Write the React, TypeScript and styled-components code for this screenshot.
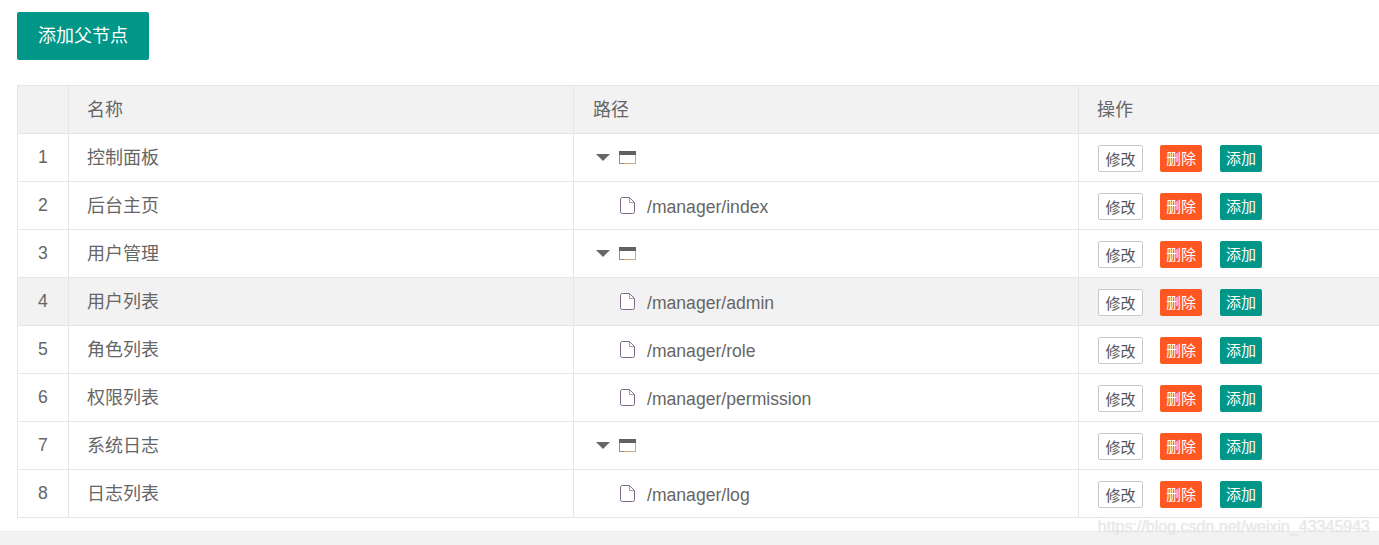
import React from "react";
import styled, { createGlobalStyle } from "styled-components";

const GlobalStyle = createGlobalStyle`
  html, body {
    margin: 0;
    padding: 0;
    background: #fff;
  }
  body {
    font-family: "Liberation Sans", "Noto Sans CJK SC", sans-serif;
    color: #666;
    overflow: hidden;
  }
`;

const Page = styled.div`
  position: relative;
  width: 1379px;
  height: 545px;
  overflow: hidden;
  display: flex;
  flex-direction: column;
`;

const Content = styled.main`
  height: 531px;
  padding: 12px 0 0 17px;
  box-sizing: border-box;
`;

const AddButton = styled.button`
  display: block;
  width: 132px;
  height: 48px;
  padding: 0 0 4px;
  border: 0;
  border-radius: 2px;
  background: #009688;
  color: #fff;
  font: 18px "Liberation Sans", "Noto Sans CJK SC", sans-serif;
`;

const Table = styled.table`
  margin-top: 25px;
  width: 1566px;
  table-layout: fixed;
  border-collapse: collapse;
  font-size: 17.6px;
`;

const Row = styled.tr<{ $hover?: boolean }>`
  height: 48px;
  background: ${({ $hover }) => ($hover ? "#f2f2f2" : "#fff")};
`;

const HeadCell = styled.th`
  padding: 0 18px 4px 19px;
  border: 1px solid #e6e6e6;
  background: #f2f2f2;
  font-weight: 400;
  font-size: 18px;
  text-align: left;
  color: #666;
  box-sizing: border-box;
  &:nth-child(2),
  &:nth-child(4) {
    padding-left: 18px;
  }
`;

const Cell = styled.td`
  padding: 0 18px;
  border: 1px solid #e6e6e6;
  box-sizing: border-box;
  white-space: nowrap;
`;

const IndexCell = styled(Cell)`
  text-align: center;
`;

const NameCell = styled(Cell)`
  font-size: 18px;
  padding-bottom: 4px;
`;

const TreeLine = styled.div<{ $leaf?: boolean }>`
  display: flex;
  align-items: center;
  padding-left: ${({ $leaf }) => ($leaf ? "28px" : "4px")};
  height: 32px;
  margin-top: ${({ $leaf }) => ($leaf ? "3px" : "0")};
`;

const PathText = styled.span`
  margin-left: 12px;
`;

const Caret = styled.i`
  width: 0;
  height: 0;
  border-style: solid;
  border-width: 7px 7px 0;
  border-color: #666 transparent transparent;
  margin-right: 9px;
`;

const Actions = styled.div`
  display: flex;
  padding-left: 1px;
  margin-top: 2px;
`;

const SmallButton = styled.button<{ $kind: "plain" | "danger" | "add" }>`
  height: 27px;
  width: ${({ $kind }) => ($kind === "plain" ? "45px" : "42px")};
  margin-left: ${({ $kind }) =>
    $kind === "plain" ? "0" : $kind === "danger" ? "17px" : "18px"};
  padding: ${({ $kind }) => ($kind === "plain" ? "0" : "0 0 2px")};
  border-radius: 2px;
  box-sizing: border-box;
  font: 15px "Liberation Sans", "Noto Sans CJK SC", sans-serif;
  border: ${({ $kind }) => ($kind === "plain" ? "1px solid #c9c9c9" : "0")};
  color: ${({ $kind }) => ($kind === "plain" ? "#555" : "#fff")};
  background: ${({ $kind }) =>
    $kind === "plain" ? "#fff" : $kind === "danger" ? "#ff5722" : "#009688"};
`;

const Footer = styled.div`
  flex: 1;
  background: #f2f2f2;
  border-top: 1px solid #eaeaea;
`;

const Watermark = styled.div`
  position: absolute;
  right: 9px;
  bottom: 9px;
  font-size: 16px;
  color: rgba(235, 235, 235, 0.75);
  text-shadow: 0 0 1px rgba(190, 190, 190, 0.5);
`;

const FileSvg = styled.svg`
  margin-bottom: 4px;
`;

const FolderIcon = () => (
  <svg width="17" height="13" viewBox="0 0 17 13">
    <rect x="0.5" y="0.5" width="16" height="12" fill="#fff" stroke="#7f93a3" />
    <rect x="0" y="0" width="17" height="4" fill="#5f6164" />
    <path d="M16.5 4v8.500M5 12.5h12" stroke="#d3a77a" fill="none" />
  </svg>
);

const FileIcon = () => (
  <FileSvg width="15" height="17" viewBox="0 0 15 17">
    <path
      d="M2.500.5h7l5 5v9a2 2 0 0 1-2 2h-10a2 2 0 0 1-2-2v-12a2 2 0 0 1 2-2z"
      fill="#fff"
      stroke="#80688c"
    />
    <path d="M9.500.5v5h5" fill="none" stroke="#a3a0a8" />
  </FileSvg>
);

type Item = { id: number; name: string; path?: string };

const items: Item[] = [
  { id: 1, name: "控制面板" },
  { id: 2, name: "后台主页", path: "/manager/index" },
  { id: 3, name: "用户管理" },
  { id: 4, name: "用户列表", path: "/manager/admin" },
  { id: 5, name: "角色列表", path: "/manager/role" },
  { id: 6, name: "权限列表", path: "/manager/permission" },
  { id: 7, name: "系统日志" },
  { id: 8, name: "日志列表", path: "/manager/log" },
];

const App = () => (
  <Page>
    <GlobalStyle />
    <Content>
      <AddButton>添加父节点</AddButton>
      <Table>
        <colgroup>
          <col width="51" />
          <col width="505" />
          <col width="505" />
          <col width="505" />
        </colgroup>
        <thead>
          <Row>
            <HeadCell />
            <HeadCell>名称</HeadCell>
            <HeadCell>路径</HeadCell>
            <HeadCell>操作</HeadCell>
          </Row>
        </thead>
        <tbody>
          {items.map((item) => (
            <Row key={item.id} $hover={item.id === 4}>
              <IndexCell>{item.id}</IndexCell>
              <NameCell>{item.name}</NameCell>
              <Cell>
                {item.path ? (
                  <TreeLine $leaf>
                    <FileIcon />
                    <PathText>{item.path}</PathText>
                  </TreeLine>
                ) : (
                  <TreeLine>
                    <Caret />
                    <FolderIcon />
                  </TreeLine>
                )}
              </Cell>
              <Cell>
                <Actions>
                  <SmallButton $kind="plain">修改</SmallButton>
                  <SmallButton $kind="danger">删除</SmallButton>
                  <SmallButton $kind="add">添加</SmallButton>
                </Actions>
              </Cell>
            </Row>
          ))}
        </tbody>
      </Table>
    </Content>
    <Footer />
    <Watermark>https://blog.csdn.net/weixin_43345943</Watermark>
  </Page>
);

export default App;
